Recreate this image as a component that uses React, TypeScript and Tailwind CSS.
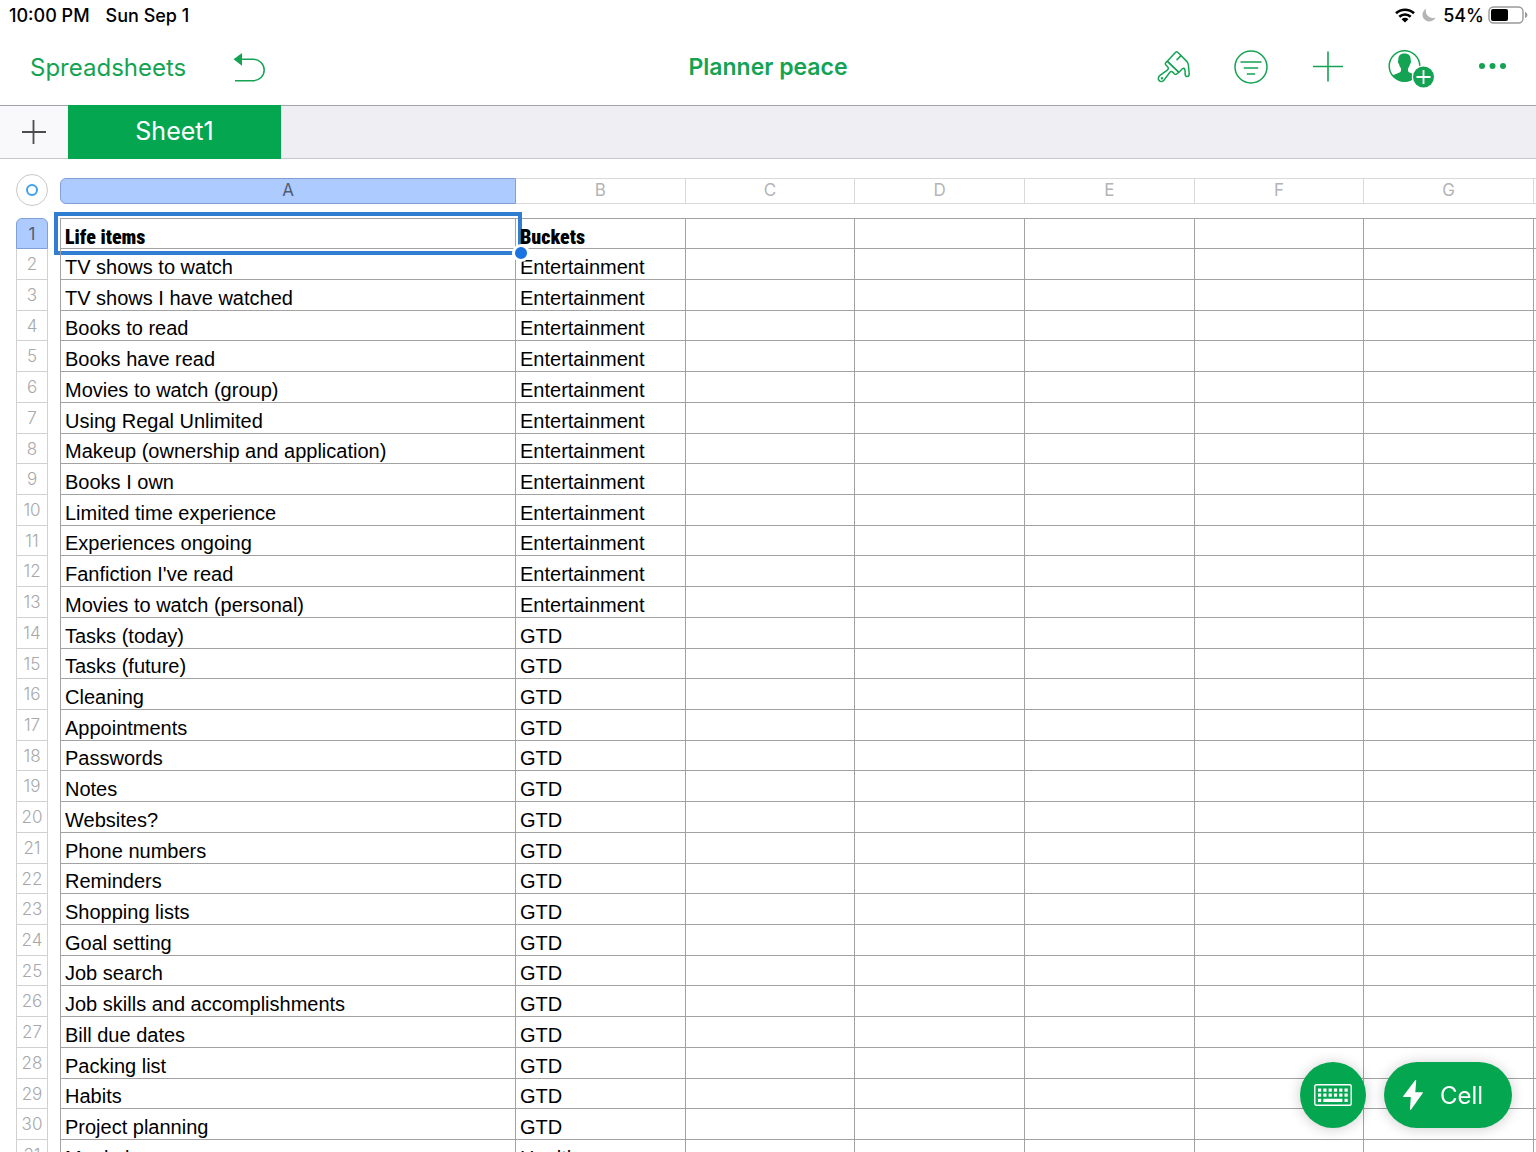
import React, { useState } from 'react';

type Row = [string, string];

const ROWS: Row[] = [
  ['Life items', 'Buckets'],
  ['TV shows to watch', 'Entertainment'],
  ['TV shows I have watched', 'Entertainment'],
  ['Books to read', 'Entertainment'],
  ['Books have read', 'Entertainment'],
  ['Movies to watch (group)', 'Entertainment'],
  ['Using Regal Unlimited', 'Entertainment'],
  ['Makeup (ownership and application)', 'Entertainment'],
  ['Books I own', 'Entertainment'],
  ['Limited time experience', 'Entertainment'],
  ['Experiences ongoing', 'Entertainment'],
  ["Fanfiction I've read", 'Entertainment'],
  ['Movies to watch (personal)', 'Entertainment'],
  ['Tasks (today)', 'GTD'],
  ['Tasks (future)', 'GTD'],
  ['Cleaning', 'GTD'],
  ['Appointments', 'GTD'],
  ['Passwords', 'GTD'],
  ['Notes', 'GTD'],
  ['Websites?', 'GTD'],
  ['Phone numbers', 'GTD'],
  ['Reminders', 'GTD'],
  ['Shopping lists', 'GTD'],
  ['Goal setting', 'GTD'],
  ['Job search', 'GTD'],
  ['Job skills and accomplishments', 'GTD'],
  ['Bill due dates', 'GTD'],
  ['Packing list', 'GTD'],
  ['Habits', 'GTD'],
  ['Project planning', 'GTD'],
  ['Meal plans', 'Health'],
];

const COLUMNS = ['B', 'C', 'D', 'E', 'F', 'G'];

const StatusBar = () => (
  <div className="flex h-[30px] items-center justify-between pl-[9px] pr-2 text-[18px] font-medium text-black">
    <div className="flex gap-4">
      <span>10:00 PM</span>
      <span>Sun Sep 1</span>
    </div>
    <div className="flex items-center gap-[7px]">
      <svg className="h-[15px] w-5" viewBox="0 0 20 15" fill="none" stroke="#000" strokeWidth="2.6">
        <path d="M1 5.3a13 13 0 0 1 18 0" />
        <path d="M4.3 8.7a8.3 8.3 0 0 1 11.4 0" />
        <path d="M10 14.6 6.6 11.2a4.9 4.9 0 0 1 6.8 0z" fill="#000" stroke="none" />
      </svg>
      <svg className="h-[14px] w-[14px]" viewBox="0 0 14 14" fill="#b4b4b4">
        <path d="M4.2.6a6.8 6.8 0 1 0 9.3 8.8A7 7 0 0 1 4.2.6z" />
      </svg>
      <div className="flex items-center gap-1">
        <span>54%</span>
        <svg className="h-[18px] w-10" viewBox="0 0 40 18">
          <rect x="1" y="1" width="34" height="16" rx="4.5" fill="none" stroke="#999" strokeWidth="1.4" />
          <rect x="3" y="3" width="17" height="12" rx="2" fill="#000" />
          <path d="M37 6v6c1.6-.6 2.4-1.7 2.4-3S38.6 6.6 37 6z" fill="#999" />
        </svg>
      </div>
    </div>
  </div>
);

const Toolbar = () => (
  <header className="grid h-[76px] grid-cols-[1fr_auto_1fr] items-center border-b border-[#a3a3ab] pb-0.5 text-[#14a353]">
    <div className="flex items-center gap-[46px] pl-[30px]">
      <button className="pt-0.5 text-[24px]">Spreadsheets</button>
      <button aria-label="Undo">
        <svg className="h-8 w-[34px]" viewBox="0 0 34 32" fill="none">
          <path d="M8 8.3h13.5a10.7 10.7 0 0 1 0 21.4H3" stroke="currentColor" strokeWidth="1.5" />
          <path d="M1.5 8.3 10 2v12.8z" fill="currentColor" />
        </svg>
      </button>
    </div>
    <h1 className="pt-0.5 text-[23px] font-semibold">Planner peace</h1>
    <div className="flex items-center justify-end pr-[26px]">
      <div className="mr-10 flex items-center gap-[43px]">
        <button aria-label="Format">
          <svg className="h-[34px] w-[34px]" viewBox="0 0 34 34" fill="none" stroke="currentColor" strokeWidth="1.5" strokeLinejoin="round" strokeLinecap="round">
            <path d="M10.3 11.2 18.6 2.2C19.3 1.5 20 1.5 20.7 2.2L30 11.6C32 13.8 31.4 16 31.8 19.5L32.2 23.5C32.3 27.5 28.2 27.5 28.1 24C28 20.5 28.6 18.5 26.6 18.3C25 18.3 24.8 19.4 23.5 20.7L21.8 22.3Z" />
            <path d="M10.3 11.2 8.7 12.8C8 13.6 8.1 14.1 8.7 14.8L10.8 17C11.8 18.2 11.3 19.3 10 20.3L3 25.4C.6 27.5 1 30 2.6 31C4.4 32.2 6.4 31.4 7.6 29.4L12.5 22.7C13.6 21.3 14.6 21 15.7 22.1L17.6 24C18.3 24.7 18.9 24.7 19.6 24L21.8 22.3Z" />
            <path d="m24 5.6-4 4" />
            <circle cx="5" cy="28.2" r=".5" />
          </svg>
        </button>
        <button aria-label="Filter">
          <svg className="h-[34px] w-[34px]" viewBox="0 0 34 34" fill="none" stroke="currentColor" strokeWidth="1.5">
            <circle cx="17" cy="17" r="16" />
            <path d="M6.5 12h21M9.8 18h14.4M12.8 24h8.4" />
          </svg>
        </button>
        <button aria-label="Insert">
          <svg className="h-[34px] w-[34px]" viewBox="0 0 34 34" fill="none" stroke="currentColor" strokeWidth="1.6">
            <path d="M17 1.5v30M2 16.5h30" />
          </svg>
        </button>
        <button aria-label="Share">
          <svg className="h-[38px] w-[48px] overflow-visible" viewBox="0 0 48 38">
            <circle cx="16.5" cy="18" r="15.3" fill="none" stroke="currentColor" strokeWidth="1.5" />
            <path d="M16.5 5.5c-4.5 0-6.4 2.7-6.2 6.5 0 .8-.5 1-.3 2 .2 1.3.6 1.6 1 2.1.4 2 1.2 3.3 2 4.3.1 2.3 0 3.3-1.5 4-2.2 1.2-5 1.7-7.1 3.2a15.5 15.5 0 0 0 24.2 0c-2.1-1.5-4.9-2-7.1-3.2-1.5-.7-1.6-1.7-1.5-4 .8-1 1.6-2.3 2-4.3.4-.5.8-.8 1-2.1.2-1-.3-1.2-.3-2 .2-3.8-1.7-6.5-6.2-6.5z" fill="currentColor" />
            <circle cx="35.5" cy="29" r="11.7" fill="#fff" />
            <circle cx="35.5" cy="29" r="10.5" fill="currentColor" />
            <path d="M35.5 22v14M28.5 29h14" stroke="#fff" strokeWidth="1.8" />
          </svg>
        </button>
      </div>
      <button aria-label="More">
        <svg className="h-[34px] w-[34px]" viewBox="0 0 34 34" fill="currentColor">
          <circle cx="6" cy="16" r="3" />
          <circle cx="16.5" cy="16" r="3" />
          <circle cx="27" cy="16" r="3" />
        </svg>
      </button>
    </div>
  </header>
);

const SheetTabs = () => (
  <nav className="flex h-[53px] border-b border-[#c8c8cc] bg-[#eeeef3]">
    <button aria-label="Add sheet" className="flex w-[68px] items-center justify-center bg-[#f9f9fb]">
      <svg className="h-6 w-6" viewBox="0 0 24 24" stroke="#4c4c4e" strokeWidth="1.8">
        <path d="M11.5 0v24M0 12h24" />
      </svg>
    </button>
    <button className="-my-px w-[213px] bg-[#04a650] text-[25px] text-white">Sheet1</button>
  </nav>
);

interface GridProps {
  selected: boolean;
  onSelect: () => void;
}

const Grid: React.FC<GridProps> = ({ selected, onSelect }) => (
  <main className="min-h-0 flex-1 overflow-hidden pl-4 pt-[15px]">
    <table className="w-full table-fixed border-separate border-spacing-0">
      <colgroup>
        <col className="w-8" />
        <col className="w-3" />
        <col className="w-[456px]" />
        {COLUMNS.map(c => <col key={c} />)}
        <col className="w-[2px]" />
      </colgroup>
      <thead>
        <tr className="h-8 text-[17px] text-[#b4b4b6]">
          <th className="p-0">
            <button aria-label="Select all" className="flex h-8 w-8 items-center justify-center rounded-full border border-[#c9c9c9]">
              <span className="h-3 w-3 rounded-full border-2 border-[#3fa0ee]"></span>
            </button>
          </th>
          <th className="p-0"></th>
          <th className="p-0 pt-0.5 font-normal">
            <div className="flex h-[26px] items-center justify-center rounded-l-md border border-[#7f9fd6] bg-[#adcbff] text-[#515c70]">A</div>
          </th>
          {COLUMNS.map(c => (
            <th key={c} className="p-0 pt-0.5 font-normal">
              <div className="flex h-[26px] items-center justify-center border-y border-r border-[#d9d9d9]">{c}</div>
            </th>
          ))}
          <th className="p-0 pt-0.5">
            <div className="h-[26px] border-y border-[#d9d9d9]"></div>
          </th>
        </tr>
        <tr className="h-3">
          <td className="p-0" colSpan={10}></td>
        </tr>
      </thead>
      <tbody>
        {ROWS.map(([item, bucket], i) => {
          const head = i === 0;
          const edge = head ? 'border-t border-r border-b border-[#a2a2a2]' : 'border-r border-b border-[#a2a2a2]';
          const label = head
            ? 'relative block h-[23px] text-[20px] font-black font-[Impact,"Roboto_Condensed","Open_Sans_Condensed","Liberation_Sans",sans-serif]'
            : 'block h-6 text-[20px]';
          return (
            <tr key={item} className={i > 0 && (i % 7 === 0 || i % 7 === 3) ? 'h-[30px]' : 'h-[31px]'}>
              <th className={head
                ? 'rounded-t-md border border-[#7f9fd6] bg-[#adcbff] p-0 text-[17px] leading-6 font-normal text-[#515c70]'
                : 'border-x border-b border-[#d0d0d0] p-0 text-[17px] leading-6 font-light text-[#a8a8aa]'}>
                {i + 1}
              </th>
              <td className="p-0"></td>
              <td
                onClick={head ? onSelect : undefined}
                className={`relative border-l p-0 pl-1 align-bottom leading-6 text-black font-["Liberation_Sans",Arial,sans-serif] ${edge}`}
              >
                <span className={label}>{item}</span>
                {head && selected && (
                  <>
                    <span className="absolute -inset-[7px] border-4 border-[#2f7ed2]"></span>
                    <span className="absolute -right-[15px] -bottom-[14px] z-10 h-[18px] w-[18px] rounded-full border-3 border-white bg-[#1a73e0]"></span>
                  </>
                )}
              </td>
              <td className={`p-0 pl-1 align-bottom leading-6 text-black font-["Liberation_Sans",Arial,sans-serif] ${edge}`}>
                <span className={label}>{bucket}</span>
              </td>
              {COLUMNS.slice(1).map(c => <td key={c} className={`p-0 ${edge}`}></td>)}
              <td className={head ? 'border-y border-[#a2a2a2] p-0' : 'border-b border-[#a2a2a2] p-0'}></td>
            </tr>
          );
        })}
      </tbody>
    </table>
  </main>
);

const FloatingActions = () => (
  <div className="fixed right-6 bottom-6 z-20 flex gap-[18px] text-white">
    <button aria-label="Keyboard" className="flex h-[66px] w-[66px] items-center justify-center rounded-full bg-[#04a650] shadow-[0_1px_14px_rgba(0,0,0,0.2)]">
      <svg className="h-[22px] w-[38px]" viewBox="0 0 38 22">
        <rect x=".8" y=".8" width="36.4" height="20.4" rx="1.5" fill="none" stroke="#fff" strokeWidth="1.4" />
        {[4, 9.3, 14.6, 19.9, 25.2, 30.5].map(x => (
          <React.Fragment key={x}>
            <rect x={x} y="4.5" width="3.2" height="3.2" fill="#fff" />
            <rect x={x} y="9.5" width="3.2" height="3.2" fill="#fff" />
          </React.Fragment>
        ))}
        <path d="M4 14.8h3.2v3.2H4zM9.3 14.8h19.1v3.2H9.3zM30.5 14.8h3.2v3.2h-3.2z" fill="#fff" />
      </svg>
    </button>
    <button className="flex h-[66px] w-32 items-center gap-[17px] rounded-full bg-[#04a650] pl-[19px] text-[24px] shadow-[0_1px_14px_rgba(0,0,0,0.2)]">
      <svg className="h-[30px] w-5" viewBox="0 0 20 30" fill="#fff">
        <path d="M12.3 0 .3 16c-.4.6-.2 1 .4 1h7.1L7 29.2c0 .8.6 1 1.1.4L19.7 13.3c.4-.6.2-1-.4-1h-7L13.2.5c0-.6-.5-.9-.9-.5z" />
      </svg>
      <span className="pt-0.5">Cell</span>
    </button>
  </div>
);

const App: React.FC = () => {
  const [selected, setSelected] = useState(true);

  return (
    <div className="flex h-screen flex-col overflow-hidden bg-white font-[Inter,sans-serif]">
      <StatusBar />
      <Toolbar />
      <SheetTabs />
      <Grid selected={selected} onSelect={() => setSelected(true)} />
      <FloatingActions />
    </div>
  );
};

export default App;
